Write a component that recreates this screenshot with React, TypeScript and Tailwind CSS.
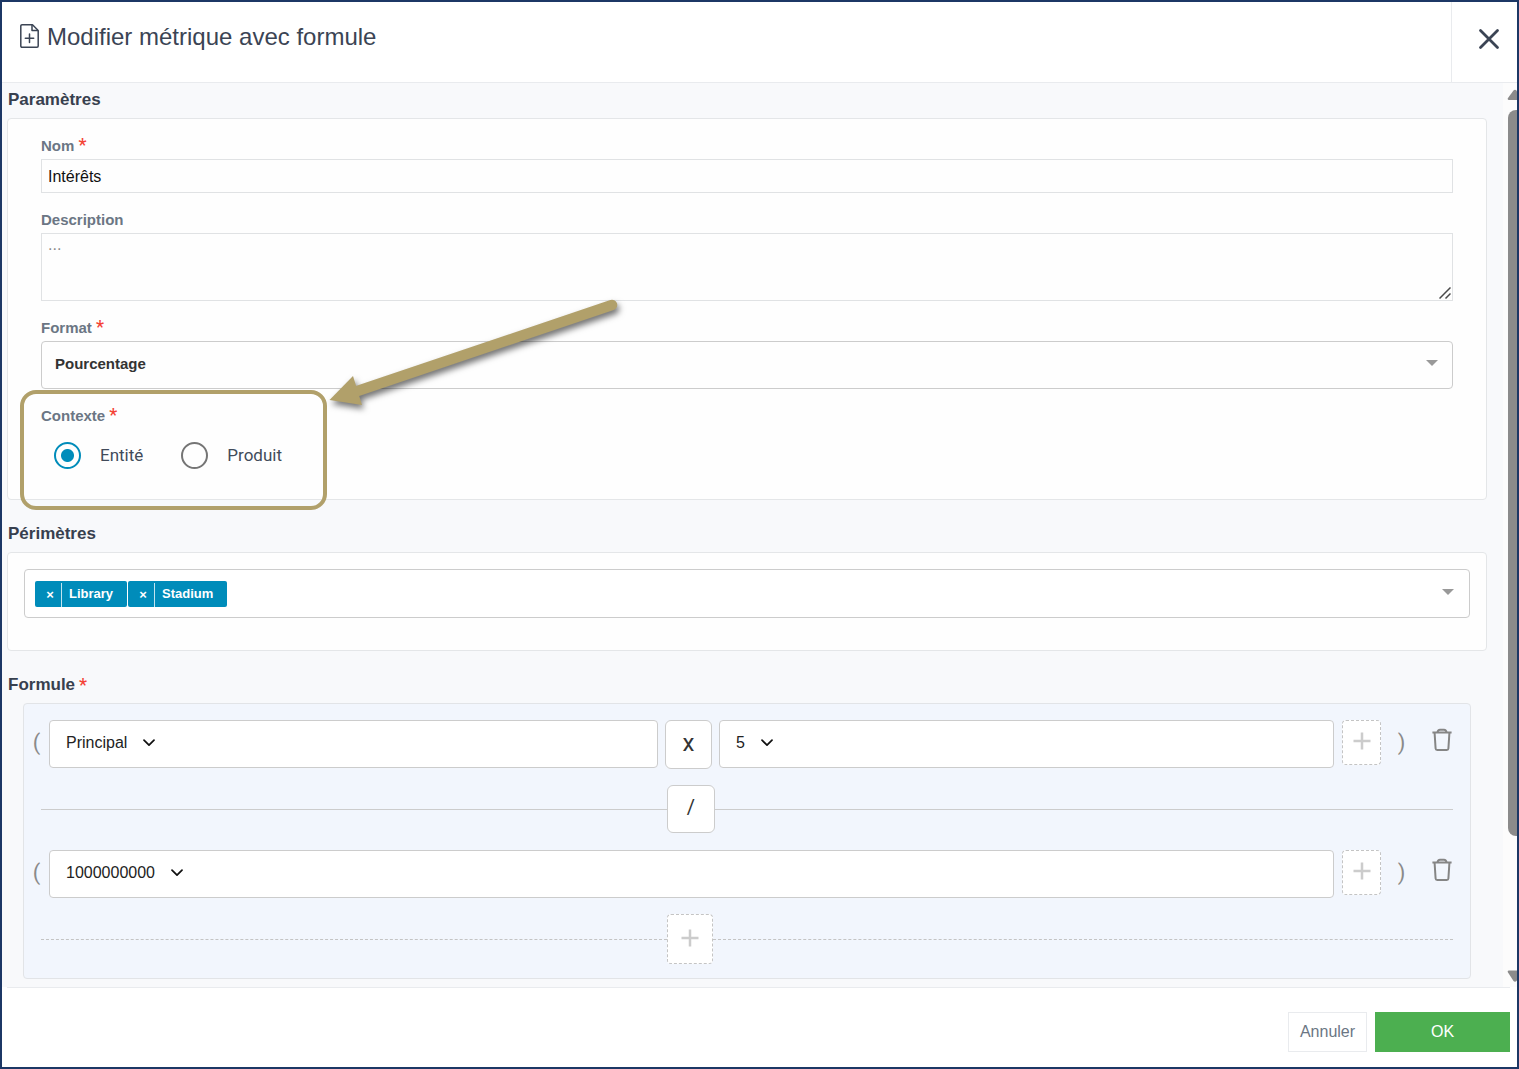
import React from 'react';
import type { ReactNode } from 'react';

const perimeters = ['Library', 'Stadium'];

function Required() {
  return <span className="font-[Roboto,sans-serif] text-lg leading-4 font-medium text-[#f44336]">*</span>;
}

function FileIcon() {
  return (
    <svg className="w-[19px] h-6 mb-0.5 shrink-0" viewBox="0 0 19 24" fill="none" stroke="currentColor" strokeWidth="1.500" strokeLinejoin="round" aria-hidden="true">
      <path d="M12.500 .8H2A1.200 1.200 0 0 0 .8 2V22A1.200 1.200 0 0 0 2 23.200H17A1.200 1.200 0 0 0 18.200 22V6.500Z" />
      <path d="M12 1V6.500H18" />
      <path d="M9.500 10V18.500M5.300 14.300H13.700" strokeLinecap="round" />
    </svg>
  );
}

function TrashIcon() {
  return (
    <svg className="w-5 h-6" viewBox="0 0 20 24" fill="none" stroke="currentColor" strokeWidth="2" aria-hidden="true">
      <path d="M.4 4.500H19.600" />
      <path d="M5.500 4.500C5.700 2.500 6.500 1.700 8 1.700H12C13.500 1.700 14.300 2.500 14.500 4.500" />
      <path d="M2.600 5L3.600 20.500Q3.700 22 5.200 22H14.800Q16.300 22 16.400 20.500L17.400 5" />
    </svg>
  );
}

function PlusIcon() {
  return (
    <svg className="w-[18px] h-[18px]" viewBox="0 0 18 18" stroke="#cccccc" strokeWidth="2.500" aria-hidden="true">
      <path d="M9 .5V17.500M.5 9H17.500" />
    </svg>
  );
}

function Caret() {
  return (
    <svg className="w-3 h-1.5 absolute right-[15px] top-[19px] pointer-events-none" viewBox="0 0 12 6" fill="#999999" aria-hidden="true">
      <path d="M0 0H12L6 6Z" />
    </svg>
  );
}

function SectionTitle({ children }: { children: ReactNode }) {
  return <h2 className="h-[35px] pl-px pb-0.5 flex items-center gap-1 text-[17px] font-bold text-[#37404e]">{children}</h2>;
}

function Operand({ value, label, className }: { value: string; label: string; className: string }) {
  return (
    <div className={`flex items-center min-w-0 h-12 pl-4 pb-0.5 bg-white border border-[#cccccc] rounded ${className}`}>
      <select aria-label={label} defaultValue={value} className="appearance-none field-sizing-content bg-transparent text-base text-[#222222]">
        <option>{value}</option>
      </select>
      <svg className="w-3 h-2 ml-4 pointer-events-none" viewBox="0 0 12 8" fill="none" stroke="#111111" strokeWidth="1.700" strokeLinecap="round" strokeLinejoin="round" aria-hidden="true">
        <path d="M1 1.200L6 6.200L11 1.200" />
      </svg>
    </div>
  );
}

function FormulaRow({ children }: { children: ReactNode }) {
  return (
    <div className="flex items-start pr-[9px]">
      <span className="w-[25px] h-11 flex items-center justify-center font-[Roboto,sans-serif] text-[22px] text-[#8a8a8a]">(</span>
      <div className="flex-1 flex items-start gap-[7px]">{children}</div>
      <button type="button" aria-label="Ajouter un opérande" className="w-[39px] h-[45px] ml-2 pb-1 flex items-center justify-center bg-white border border-dashed border-[#c4c4c4] rounded">
        <PlusIcon />
      </button>
      <span className="w-[41px] h-11 flex items-center justify-center font-[Roboto,sans-serif] text-[22px] text-[#8a8a8a]">)</span>
      <button type="button" aria-label="Supprimer la ligne" className="w-[39px] h-10 flex items-center justify-center text-[#858585]">
        <TrashIcon />
      </button>
    </div>
  );
}

function Callout() {
  return (
    <div className="absolute -left-[21px] -top-[13px] w-[307px] h-[120px] border-4 border-[#b1a06a] rounded-2xl pointer-events-none" aria-hidden="true">
      <svg className="absolute left-[296px] -top-[104px] w-[320px] h-[130px] drop-shadow-[2px_4px_3px_rgba(0,0,0,0.55)]" viewBox="320 290 320 130" fill="#b1a06a">
        <path d="M356 391.500L612 305" stroke="#b1a06a" strokeWidth="10.500" strokeLinecap="round" />
        <path d="M329.500 400L353 376L362 405Z" />
      </svg>
    </div>
  );
}

function Scrollbar() {
  return (
    <div className="w-3.5 shrink-0 flex flex-col overflow-hidden bg-[#fcfcfc] pl-1" aria-hidden="true">
      <svg className="w-4 h-[27px] shrink-0" viewBox="0 0 16 27" fill="#8b8b8b">
        <path d="M6.500 7.500Q8 6 9.500 7.500L15 15Q16 17 14 17H2Q0 17 1 15Z" />
      </svg>
      <div className="flex-726 w-4 ml-px rounded-lg bg-[#8b8b8b]" />
      <div className="flex-134" />
      <svg className="w-4 h-[17px] shrink-0" viewBox="0 0 16 17" fill="#8b8b8b">
        <path d="M6.500 11Q8 12.500 9.500 11L15 2.500Q16 .5 14 .5H2Q0 .5 1 2.500Z" />
      </svg>
    </div>
  );
}

export default function App() {
  return (
    <div className="min-h-screen flex flex-col bg-white border-2 border-[#1c3765] font-['Liberation_Sans',Arial,sans-serif]">
      {/* Title bar */}
      <header className="flex justify-between border-b border-[#e9ebee] text-[#3b4454]">
        <h1 className="h-[70px] pl-[18px] flex items-center gap-2 text-2xl">
          <FileIcon />
          Modifier métrique avec formule
        </h1>
        <button type="button" aria-label="Fermer" className="w-[66px] h-20 pl-2 pb-1.5 flex items-center justify-center border-l border-[#e9ebee]">
          <svg className="w-[22px] h-[22px]" viewBox="0 0 22 22" stroke="currentColor" strokeWidth="2.800" strokeLinecap="round" aria-hidden="true">
            <path d="M2.500 2.500L19.500 19.500M19.500 2.500L2.500 19.500" />
          </svg>
        </button>
      </header>

      <div className="flex-1 flex bg-[#f8f9fb]">
        <main className="flex-1 min-w-0 pl-[5px] pr-4 pb-2">
          <SectionTitle>Paramètres</SectionTitle>
          <section className="flex flex-col gap-3.5 bg-[#fefefe] border border-[#e4e6e8] rounded px-[33px] pt-3.5 pb-[30px] mb-[17px]">
            <div>
              <label htmlFor="name" className="block h-[26px] text-[15px] leading-[26px] font-bold text-[#6b7684]">Nom <Required /></label>
              <input id="name" defaultValue="Intérêts" className="block w-full h-[34px] px-1.5 pt-0.5 border border-[#e0e2e4] text-base text-[#111111]" />
            </div>
            <div>
              <label htmlFor="description" className="block h-[26px] text-[15px] leading-[26px] font-bold text-[#6b7684]">Description</label>
              <div className="relative">
                <textarea id="description" placeholder="..." className="block w-full h-[68px] px-1.5 resize-none border border-[#e0e2e4] text-base leading-[22px] placeholder:text-[#8a8a8a]" />
                <svg className="absolute right-0.5 bottom-0.5 w-3 h-3 pointer-events-none" viewBox="0 0 12 12" stroke="#4a4a4a" strokeWidth="1.500" aria-hidden="true">
                  <path d="M.5 11.500L11.500 .5M6.500 11.500L11.500 6.500" />
                </svg>
              </div>
            </div>
            <div>
              <label htmlFor="format" className="block h-[26px] text-[15px] leading-[26px] font-bold text-[#6b7684]">Format <Required /></label>
              <div className="relative">
                <select id="format" defaultValue="Pourcentage" className="block appearance-none w-full h-12 px-[13px] pb-0.5 bg-[#fefefe] border border-[#cccccc] rounded text-[15px] font-bold text-[#333333]">
                  <option>Pourcentage</option>
                </select>
                <Caret />
              </div>
            </div>
            <div className="relative" role="radiogroup" aria-labelledby="context-label">
              <div id="context-label" className="h-[26px] text-[15px] leading-[26px] font-bold text-[#6b7684]">Contexte <Required /></div>
              <div className="flex gap-[38px] pt-[13px] pl-[13px] font-[Roboto,sans-serif] text-[17px] text-[#414b5a]">
                <label className="flex items-center gap-[19px]">
                  <input type="radio" name="context" defaultChecked className="appearance-none size-[27px] rounded-full border-2 border-[#757575] checked:border-[#008cba] checked:bg-[radial-gradient(circle,#008cba_6px,transparent_7px)]" />
                  Entité
                </label>
                <label className="flex items-center gap-[19px]">
                  <input type="radio" name="context" className="appearance-none size-[27px] rounded-full border-2 border-[#757575] checked:border-[#008cba] checked:bg-[radial-gradient(circle,#008cba_6px,transparent_7px)]" />
                  Produit
                </label>
              </div>
              <Callout />
            </div>
          </section>

          <SectionTitle>Périmètres</SectionTitle>
          <section className="bg-[#fefefe] border border-[#e4e6e8] rounded px-4 pt-4 pb-8 mb-[17px]">
            <div className="relative flex items-center gap-px h-[49px] pl-2.5 bg-white border border-[#cccccc] rounded">
              {perimeters.map((name) => (
                <span key={name} className="flex items-center h-[26px] pr-3.5 rounded-xs bg-[#008cba] text-white text-[13px] font-bold">
                  <button type="button" aria-label={`Retirer ${name}`} className="w-[27px] h-6 pl-1 mr-[7px] mt-0.5 border-r border-[#c2e4ef]">×</button>
                  {name}
                </span>
              ))}
              <input aria-label="Périmètres" className="flex-1 min-w-0 h-full bg-transparent outline-none" />
              <Caret />
            </div>
          </section>

          <SectionTitle>Formule <Required /></SectionTitle>
          <section className="mx-4 pt-4 pb-3.5 bg-[#f2f6fd] border border-[#e2e4e7] rounded">
            <FormulaRow>
              <Operand value="Principal" label="Premier opérande" className="flex-99" />
              <button type="button" className="w-[47px] h-[49px] pb-1 bg-white border border-[#cccccc] rounded-md font-[Roboto,sans-serif] text-2xl text-[#333333]">x</button>
              <Operand value="5" label="Second opérande" className="flex-100" />
            </FormulaRow>
            <div className="flex items-center mx-[17px] mt-4 mb-[17px]">
              <hr className="flex-626 border-[#cccccc]" />
              <button type="button" className="w-12 h-12 pb-1 bg-white border border-[#cccccc] rounded-md font-[Roboto,sans-serif] text-xl text-[#333333]">/</button>
              <hr className="flex-738 border-[#cccccc]" />
            </div>
            <FormulaRow>
              <Operand value="1000000000" label="Diviseur" className="flex-1" />
            </FormulaRow>
            <div className="flex items-center mx-[17px] mt-4">
              <hr className="flex-626 border-dashed border-[#c4c4c4]" />
              <button type="button" aria-label="Ajouter une ligne" className="w-[46px] h-[50px] pb-0.5 flex items-center justify-center bg-white border border-dashed border-[#c4c4c4] rounded">
                <PlusIcon />
              </button>
              <hr className="flex-740 border-dashed border-[#c4c4c4]" />
            </div>
          </section>
        </main>
        <Scrollbar />
      </div>

      <footer className="flex justify-end gap-2 ml-[5px] mr-[7px] pt-6 pb-[15px] border-t border-[#e9ebee]">
        <button type="button" className="w-[79px] h-10 border border-[#e9ebee] text-base text-[#6b7684]">Annuler</button>
        <button type="button" className="w-[135px] h-10 bg-[#4caf50] text-base text-white">OK</button>
      </footer>
    </div>
  );
}
